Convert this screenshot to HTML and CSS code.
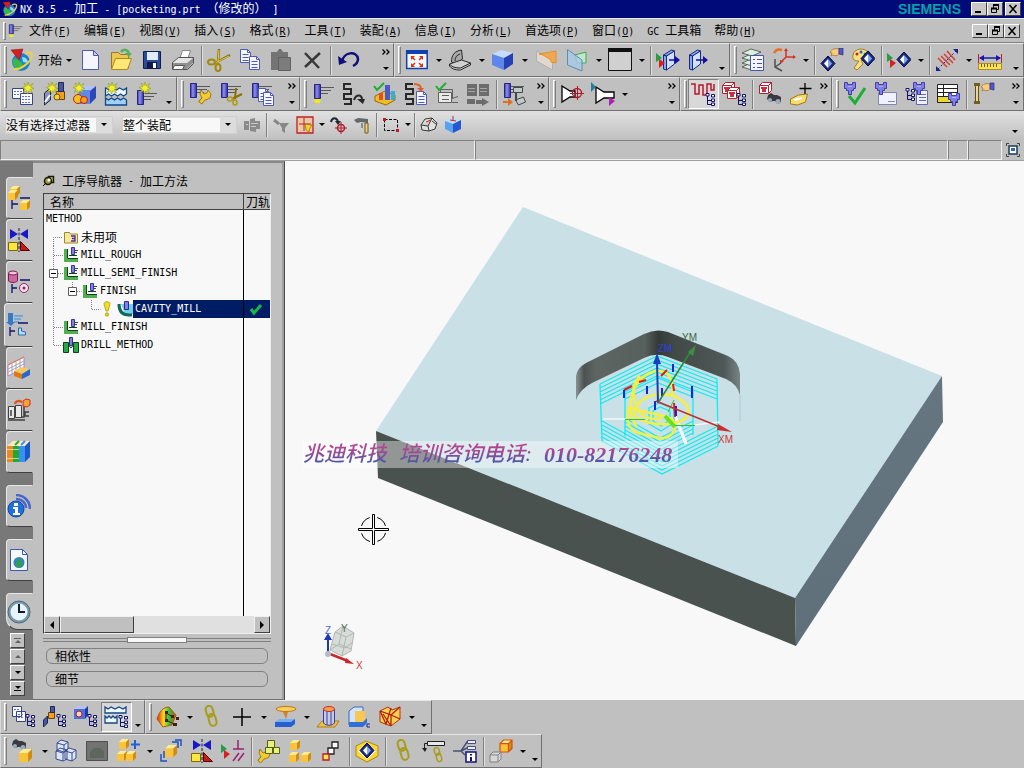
FILE: index.html
```html
<!DOCTYPE html>
<html lang="zh-CN">
<head>
  <meta charset="UTF-8">
  <meta name="viewport" content="width=device-width, initial-scale=1.0">
  <title>NX 8.5 - 加工</title>
  <link rel="stylesheet" href="styles.css">
</head>
<body>

  <!-- icons -->
  <svg class="sprite" aria-hidden="true">
    <defs>
      <linearGradient id="rainbow" x1="0" x2="1"><stop offset="0" stop-color="#e82010"/><stop offset=".35" stop-color="#f8d820"/><stop offset=".65" stop-color="#30c040"/><stop offset="1" stop-color="#e04020"/></linearGradient>
      <linearGradient id="steel" x1="0" x2="1"><stop offset="0" stop-color="#3838a0"/><stop offset=".4" stop-color="#9090f0"/><stop offset="1" stop-color="#2c2c98"/></linearGradient>
      <g id="p-mill"><path stroke="#585858" d="M8 4.500h14M8 7.500h11M8 10.500h8"/><path fill="url(#steel)" stroke="#24248a" d="M2.500 1.500h6v14h-6z"/></g>
      <g id="p-star"><path fill="#f4ee30" stroke="#8a9a10" stroke-width=".6" d="M6 0l1.200 3.800L11 1.500 8.500 5 12 6.500 8.300 7.400 10.500 11 6.800 8.800 5.500 12 4.600 8.600 1 10.500 3.400 7 0 5.500 3.800 4.600 2 1l3.200 2.600z"/></g>
      <g id="p-tree" fill="none" stroke="#10106c"><path d="M2.500 3v8.500H6M2.500 7.500H6"/><path fill="#fff" d="M1 .5h3v2.500H1zM6.500 1.500h3V4h-3zM6.500 6h3v2.500h-3zM6.500 10h3v2.500h-3z"/></g>
      <g id="p-cube"><path fill="#ffec90" d="M0 3l3-3h7L7 3z"/><path fill="#f9c43c" d="M0 3h7v7H0z"/><path fill="#d08c10" d="M7 3l3-3v7l-3 3z"/></g>
      <g id="p-doc"><path fill="#f4f6ff" stroke="#5058b8" d="M.5.500h7l3 3v10H.5z"/><path fill="none" stroke="#5058b8" d="M7.500.500v3h3M2.500 5.500h6M2.500 8.500h6M2.500 11.500h6"/></g>
      <g id="p-diamond"><path fill="#1c2c80" stroke="#000040" d="M8 0l7 7.500L8 15 1 7.500z"/><path fill="#fff" d="M8 3v9L4 7.500z"/><path fill="#80a8e8" d="M8 3v9l4-4.500z"/></g>
      <g id="p-hand"><path fill="#f8cc80" stroke="#a06820" stroke-width=".7" d="M0 4c2-3 5-4 9-3v5c-2 2-4 2-6 1L1 8l1-3z"/><path fill="#5058c8" stroke="#282890" stroke-width=".7" d="M9 0h4v7l-4-1z"/></g>
      <g id="p-bino"><path fill="#3a3a40" d="M1 2l3-2 3 2h3l4 2v5l-3 2-3-3H6l-3 1-3-3z"/><circle cx="3" cy="7" r="2" fill="#9ab"/><circle cx="11" cy="8.500" r="2.500" fill="#9ab"/></g>
      <g id="p-spin"><path fill="#8080e8" stroke="#4040a0" d="M.5.500h3v2h5v-2h3v6h-2v2h-2v4h-3v-4h-2v-2h-2z"/><path stroke="#b0b0f8" d="M4 4.500h4"/></g>
      <g id="p-rg"><path fill="#20a040" d="M0 0l6 5-6 4z"/><path fill="#d82020" d="M3 6l6 4-6 5z"/></g>
      <g id="p-chain" fill="none" stroke="#a89c18" stroke-width="2"><rect x="2" y="1" width="7" height="11" rx="3.500" transform="rotate(-15 5 6)"/><rect x="5" y="9" width="7" height="12" rx="3.500" transform="rotate(-15 8 15)"/></g>
      <g id="p-wrench"><path fill="none" stroke="#8a6a08" stroke-width="4.500" d="M2 14l6-7"/><path fill="#f4cc30" stroke="#8a6a08" stroke-width=".8" d="M3 1l3 4 3-1 1-3 3 4-1 4-4 2-4-2-2-4z"/><path stroke="#f4cc30" stroke-width="3" d="M2.500 13.500L9 6"/></g>
      <g id="p-red"><path fill="#fff" stroke="#b02030" d="M.5 3.500l3-3h9v8l-3 3h-9z"/><path fill="#c83040" d="M2 5h6v2H7v3H3V7H2z"/><path fill="none" stroke="#b02030" d="M9.500 11V3.500l3-3M.5 3.500h9"/></g>
    </defs>

    <symbol id="nx" viewBox="0 0 24 24"><circle cx="11" cy="14" r="9" fill="#1d7fd0"/><path fill="#38b848" d="M3 12c3-4 5 0 8 2s2 6-2 8c-4-1-7-5-6-10z"/><path fill="#8fe0f0" d="M12 9c4 0 6 3 6 6l-5-1z"/><path fill="#d42020" stroke="#801010" stroke-width=".5" d="M1 2l12-1-4 11z"/><path fill="none" stroke="#f0d040" stroke-width="2" d="M4 21c6 1 17-6 18-14 0-3-4-3-7-1"/></symbol>
    <symbol id="new" viewBox="0 0 24 24"><path fill="#f4f6ff" stroke="#5058b8" d="M4.500 2.500h11l5 5v14h-16z"/><path fill="#c8ccf4" stroke="#5058b8" d="M15.500 2.500v5h5z"/></symbol>
    <symbol id="open" viewBox="0 0 24 24"><path fill="#e8c850" stroke="#a07818" d="M2.500 4.500h7l2 2h8v14h-17z"/><path fill="#ffe878" stroke="#b08a18" d="M2.500 21.500l4-11h16l-4 11z"/><path fill="none" stroke="#58b058" stroke-width="2.500" d="M12 4c2-3 6-3 8 1"/><path fill="#58b058" d="M16 5h7l-3 4z"/></symbol>
    <symbol id="save" viewBox="0 0 24 24"><path fill="#2c4c98" stroke="#101c50" d="M3.500 3.500h17v17h-17z"/><path fill="#e0ecff" d="M7 4h11v8H7z"/><path fill="#10184a" d="M7 14h10v7H7z"/><path fill="#fff" d="M13 15h3v5h-3z"/></symbol>
    <symbol id="print" viewBox="0 0 24 24"><path fill="#fff" stroke="#888" d="M8.500 11.500l3-9h8l-3 9z"/><path fill="#e4e4e4" stroke="#505050" d="M1.500 14.500l6-5h15v6l-6 6h-15z"/><path fill="#909090" d="M2 15h14l6-5v5l-6 6H2z"/><path fill="#f8f8f8" stroke="#555" d="M3.500 17.500h10l-2 4h-10z"/></symbol>
    <symbol id="cut" viewBox="0 0 24 24"><path stroke="#8a7008" stroke-width="2.500" d="M12 1l-1 13M23 7L8 15"/><path stroke="#e8d050" d="M12 2l-1 12M22 8L8 15"/><g fill="none" stroke="#a08a10" stroke-width="2"><ellipse cx="4.500" cy="14" rx="3.500" ry="2.500"/><ellipse cx="11" cy="19.500" rx="2.500" ry="3.500"/></g></symbol>
    <symbol id="copy" viewBox="0 0 24 24"><use href="#p-doc" x="2" y="1"/><use href="#p-doc" x="11" y="8"/></symbol>
    <symbol id="paste" viewBox="0 0 24 24"><path fill="#747474" d="M2 4h6l2-3h2l2 3h5v18H2z"/><path fill="#7c7c7c" stroke="#606060" d="M9.500 9.500h12v13h-12z"/></symbol>
    <symbol id="del" viewBox="0 0 24 24"><path stroke="#383838" stroke-width="2.500" d="M5 5l14 15M20 5L5 19"/></symbol>
    <symbol id="undo" viewBox="0 0 24 24"><path fill="none" stroke="#10107c" stroke-width="2.500" d="M6 14c1-10 15-12 16-3 0 4-3 6-5 7"/><path fill="#10107c" d="M2 8l1 9 8-3z"/></symbol>
    <symbol id="more" viewBox="0 0 8 6"><path fill="none" stroke="#000" stroke-width="1.300" d="M.5.500L3 3 .5 5.500M4.500.500L7 3 4.500 5.500"/></symbol>

    <symbol id="fit" viewBox="0 0 24 24"><path fill="#f4f8ff" stroke="#1040b0" stroke-width="1.500" d="M1.700 3h20.500v17.500H1.700z"/><path fill="#1040b0" d="M1 2h22v4H1z"/><path fill="#e03010" d="M6 8h4L6 12zM18 8v4l-4-4zM6 19v-4l4 4zM18 19h-4l4-4z"/><path stroke="#e03010" stroke-width="1.500" d="M7 9l3 3M17 9l-3 3M7 18l3-3M17 18l-3-3"/></symbol>
    <symbol id="laptop" viewBox="0 0 24 24"><path fill="#a8a8a8" stroke="#282828" d="M3.500 14c0-7 3-11 10-12l1 9-7 5z"/><path fill="#d0d0d0" stroke="#282828" d="M1.500 16l12-4 9 3-10 5c-5 0-9-1-11-4z"/><path fill="none" stroke="#282828" d="M7 13c0-4 2-6 5-7M1.500 16v2c3 4 8 4 11 4l10-5v-2"/></symbol>
    <symbol id="bluecube" viewBox="0 0 24 24"><path fill="#c4dcff" d="M1 6l9-4 12 3-9 5z"/><path fill="#5f86ec" d="M1 6l12 4v12L1 17z"/><path fill="#2440b4" d="M13 10l9-5v11l-9 6z"/></symbol>
    <symbol id="secorange" viewBox="0 0 24 24"><path fill="#e0d8d0" stroke="#b0b0b0" d="M2.500 3l16 9v10l-16-9z"/><path fill="#f0a850" stroke="#e09030" d="M5 6l17-3v12l-5-1v-2l-8-5z"/></symbol>
    <symbol id="secgreen" viewBox="0 0 24 24"><path fill="#c0e8c8" stroke="#40a858" d="M10 7l11-3v11h-9z"/><path fill="#a8c8e8" fill-opacity=".8" stroke="#5890b0" d="M2.500 1.500L17 12v11L2.500 17z"/></symbol>
    <symbol id="blank" viewBox="0 0 24 24"><path fill="#d0d0d0" stroke="#101010" d="M.5 1.500h23v21H.5z"/><path fill="#101010" d="M0 0h24v4H0z"/></symbol>
    <symbol id="boxin" viewBox="0 0 24 24"><path fill="#88a8f0" stroke="#182880" d="M7.500 7l3 1v14l-3-1zM10.500 8l8-5-3-1-8 5z"/><path fill="#d0e0ff" stroke="#182880" d="M10.500 8l8-5v13l-8 6z"/><use href="#p-rg" y="5"/><path stroke="#1010a0" stroke-width="1.500" d="M13 12h8"/><path fill="#1010a0" d="M19 8l5 4-5 4z"/></symbol>
    <symbol id="boxout" viewBox="0 0 24 24"><path fill="#88a8f0" stroke="#182880" d="M2.500 7l3 1v14l-3-1zM5.500 8l8-5-3-1-8 5z"/><path fill="#d0e0ff" stroke="#182880" d="M5.500 8l8-5v13l-8 6z"/><path stroke="#1010a0" stroke-width="1.500" d="M9 12h10"/><path fill="#1010a0" d="M16 8l5 4-5 4z"/></symbol>
    <symbol id="layers" viewBox="0 0 24 24"><g fill="#d8f0dc" stroke="#404848" stroke-width=".8"><path d="M1 19l9-4 10 3-9 4z"/><path d="M1 15l9-4 10 3-9 4z"/><path d="M1 10l9-4 10 3-9 4z"/><path d="M1 5l9-4 10 3-9 4z"/></g><path fill="#f4f6ff" stroke="#4850b0" d="M9.500 7.500h13v15h-13z"/><path stroke="#4850b0" d="M12 11.500h2M16 11.500h5M12 15.500h2M16 15.500h5M12 19.500h2M16 19.500h5"/></symbol>
    <symbol id="wcs" viewBox="0 0 24 24"><path fill="none" stroke="#d83020" stroke-width="1.500" d="M14 2v7l-4 4M14 9h8"/><path fill="#d83020" d="M12 3l2-3 2 3zM21 7l3 2-3 2zM8 12v4l4-3z"/><path fill="none" stroke="#505050" stroke-width="1.500" d="M3 11v8l7 4M3 19l6-4"/><path fill="none" stroke="#e87020" stroke-width="2.500" d="M2 5c2-4 5-4 8-3"/></symbol>
    <symbol id="showhide" viewBox="0 0 24 24"><use href="#p-diamond" y="8"/><use href="#p-hand" x="10"/></symbol>
    <symbol id="palette" viewBox="0 0 24 24"><path fill="#f8e080" stroke="#a08020" d="M2 7C3 0 14-1 18 5l-4 6-4 1 2 4-6 6-3-2 5-7C4 13 1 12 2 7z"/><circle cx="6" cy="6" r="1.500" fill="#d02020"/><circle cx="10" cy="4" r="1.500" fill="#2060d0"/><circle cx="14" cy="6" r="1.500" fill="#20a040"/><use href="#p-diamond" x="9" y="3"/></symbol>
    <symbol id="moveobj" viewBox="0 0 24 24"><use href="#p-rg" y="5"/><use href="#p-diamond" x="9" y="4"/></symbol>
    <symbol id="measure1" viewBox="0 0 24 24"><g stroke="#d04030" stroke-width="1.500" fill="none"><path d="M3 10l9 9M6 8l9 9M9 6l9 9M12 3l8 9"/></g><path stroke="#202080" d="M3 21L21 3" stroke-dasharray="2 2"/><path fill="#202080" d="M18 1h5v5zM1 18v5h5z"/></symbol>
    <symbol id="ruler" viewBox="0 0 24 24"><path fill="#f8e060" stroke="#b09018" d="M.5 15.500h23v6H.5z"/><path stroke="#706010" d="M3.500 16v3M6.500 16v3M9.500 16v3M12.500 16v3M15.500 16v3M18.500 16v3"/><path stroke="#c02020" d="M.5 6v9M23.500 6v9"/><path stroke="#1818b0" stroke-width="1.500" d="M2 10h20"/><path fill="#1818b0" d="M1 10l5-3v6zM23 10l-5-3v6z"/></symbol>

    <symbol id="cprog" viewBox="0 0 24 24"><path fill="#f8f8ff" stroke="#3a4288" d="M1.500 6.500h11v10h-11z"/><path stroke="#6070c0" stroke-dasharray="2 1" d="M3 9.500h8M3 12.500h8"/><path fill="#f8f8ff" stroke="#3a4288" d="M9.500 11.500h12v11h-12z"/><path stroke="#6070c0" stroke-dasharray="2 1" d="M11 14.500h9M11 17.500h9M11 20.500h9"/><use href="#p-star" x="11"/></symbol>
    <symbol id="ctool" viewBox="0 0 24 24"><path fill="#8090c0" stroke="#202850" d="M2.500 11l6-5v12l-6 5z"/><path stroke="#fff" stroke-width="2" d="M3 20l5-7"/><path fill="#f0a020" stroke="#704008" d="M14.500 9.500h8v8h-8z"/><path fill="#4858a0" stroke="#202850" d="M16.500.500h5v9h-5z"/><circle cx="15" cy="15" r="3" fill="#f8d030" stroke="#705008"/><use href="#p-star" x="4"/></symbol>
    <symbol id="cgeom" viewBox="0 0 24 24"><path fill="#b0c4ff" d="M5 8l6-4h12l-6 5z"/><path fill="#6088f0" d="M5 8h12v14H5z"/><path fill="#2c48b8" d="M17 9l6-5v12l-6 6z"/><circle cx="5" cy="17" r="4.500" fill="#f0c020" stroke="#c02010"/><circle cx="11" cy="18" r="3.500" fill="#f0a020" stroke="#c02010"/><use href="#p-star"/></symbol>
    <symbol id="cmeth" viewBox="0 0 24 24"><path fill="#f0f8ff" stroke="#104888" stroke-width="1.300" d="M1.500 6v8l3-2 3 2 3-2 3 2 3-2 3 2 3-2V6l-3 2-4-2-3 2-4-2-3 2z"/><path fill="#a0d0f8" stroke="#104888" stroke-width="1.300" d="M1.500 23v-7l3 2 3-2 3 2 3-2 3 2 3-2 3 2v5z"/><use href="#p-star" x="2"/></symbol>
    <symbol id="cop" viewBox="0 0 24 24"><use href="#p-mill" y="7"/><use href="#p-star" x="4"/></symbol>
    <symbol id="oedit" viewBox="0 0 24 24"><use href="#p-mill"/><use href="#p-wrench" x="10" y="7"/></symbol>
    <symbol id="ocut" viewBox="0 0 24 24"><use href="#p-mill"/><path stroke="#8a7008" stroke-width="2" d="M17 6l-1 11M23 12l-10 5"/><g fill="none" stroke="#b09a18" stroke-width="1.500"><ellipse cx="11" cy="17" rx="2.500" ry="2"/><ellipse cx="16" cy="20.500" rx="2" ry="2.500"/></g></symbol>
    <symbol id="ocopy" viewBox="0 0 24 24"><use href="#p-mill"/><use href="#p-doc" x="8" y="6"/><use href="#p-doc" x="13" y="10"/></symbol>
    <symbol id="gen" viewBox="0 0 24 24"><use href="#p-mill" x="1" y="1"/><path fill="#f0e820" d="M3 17h7l-1 4H4z"/></symbol>
    <symbol id="replay" viewBox="0 0 24 24"><path fill="none" stroke="#282828" stroke-width="2" d="M9 2H2v5h7v5H2v5h7v5H2M12 18c2-6 8-6 8 0"/><path fill="#282828" d="M15 17h8l-2 5z"/></symbol>
    <symbol id="verify" viewBox="0 0 24 24"><path fill="#f0c020" stroke="#a06808" d="M2 14l10-5 10 4v5l-9 5-11-4z"/><path fill="#e05030" d="M6 11h4v7H6z"/><path fill="#4a58c8" d="M12 3h5v15h-5z"/><path fill="#30b0d8" d="M18 9h4v9h-4z"/><path fill="none" stroke="#18b030" stroke-width="2" d="M1 4l3 4 7-7"/></symbol>
    <symbol id="listing" viewBox="0 0 24 24"><path fill="none" stroke="#282828" stroke-width="2" d="M9 2H2v5h7v5H2v5h7v5H2"/><use href="#p-doc" x="12" y="9"/><path fill="none" stroke="#e06020" stroke-width="2" d="M10 2c5 0 7 2 7 5"/><path fill="#e06020" d="M13 6h7l-3 4z"/></symbol>
    <symbol id="sim" viewBox="0 0 24 24"><path fill="#e8e8e8" stroke="#606060" d="M3.500 10.500h13v10h-13z"/><path fill="none" stroke="#606060" d="M5.500 10V7.500h12v9M7 13.500h7M7 17.500h7M17 20.500h6M17 16.500l6-2"/><path fill="none" stroke="#20b030" stroke-width="2" d="M1 4l3 4 7-7"/></symbol>
    <symbol id="grayops" viewBox="0 0 24 24"><path fill="#6c6c6c" d="M1 2h10v12H1zM13 2h10v12H13zM1 17h8v5H1zM10 18h6v-2l7 4-7 4v-2h-6z"/><path stroke="#a4a4a4" d="M2 6.500h7M2 9.500h7M14 6.500h7M14 9.500h7"/></symbol>
    <symbol id="post" viewBox="0 0 24 24"><use href="#p-mill"/><path fill="none" stroke="#e07020" stroke-width="2" d="M1 20h6"/><path fill="#e07020" d="M6 16l5 4-5 4z"/><path fill="#c0c8c8" stroke="#404848" d="M11.500 5.500h9v5h-9zM13.500 18l8-3 2 5-7 3z"/><path fill="none" stroke="#404848" stroke-width="2" d="M14 11v8"/></symbol>
    <symbol id="horn1" viewBox="0 0 24 24"><path fill="#fff" stroke="#000" stroke-width="1.300" d="M2 4l8 5h5v6h-5l-8 5z"/><circle cx="17" cy="11" r="4.500" fill="none" stroke="#b01828" stroke-width="1.300"/><path stroke="#b01828" d="M10 11.500h14M17.500 4v14"/></symbol>
    <symbol id="horn2" viewBox="0 0 24 24"><path fill="#fff" stroke="#000" stroke-width="1.300" d="M5 5l8 5h10v6H13l-8 5z"/><path fill="#2080a0" d="M0 0l5 5-5 5z"/><path fill="#b020b0" d="M18 15l6 4-6 5z"/></symbol>
    <symbol id="progview" viewBox="0 0 24 24"><path fill="none" stroke="#b81828" stroke-width="1.500" d="M0 2h4v10h4V3h4v10h4V2h4v6h3V2"/><use href="#p-tree" x="14" y="11"/></symbol>
    <symbol id="toolview" viewBox="0 0 24 24"><use href="#p-red"/><use href="#p-red" x="5" y="5"/><use href="#p-tree" x="14" y="11"/></symbol>
    <symbol id="findred" viewBox="0 0 24 24"><use href="#p-red" x="1"/><use href="#p-bino" x="9" y="11"/></symbol>
    <symbol id="plus" viewBox="0 0 24 24"><path stroke="#000" stroke-width="1.300" d="M16 1v11M10.500 6.500h12"/><path fill="#f8dc70" stroke="#a07818" d="M1.500 17l8-4 9-1-2 8-8 3-7-1z"/><path stroke="#fff" stroke-width="2" d="M5 18l8-2"/></symbol>
    <symbol id="vcheck" viewBox="0 0 24 24"><use href="#p-spin" x="1"/><path fill="none" stroke="#18b030" stroke-width="3" d="M6 14l6 7L22 6"/></symbol>
    <symbol id="vcard" viewBox="0 0 24 24"><path fill="#f0f0ff" stroke="#8088b0" d="M4.500 10.500h18v12h-18z"/><path stroke="#8088b0" d="M14 19.500h7"/><use href="#p-spin" x="1"/></symbol>
    <symbol id="vtree" viewBox="0 0 24 24"><use href="#p-tree" y="6"/><path fill="#f0f0ff" stroke="#6068b8" d="M11.500 8.500h11v14h-11z"/><path stroke="#6068b8" d="M14 12.500h7M14 15.500h7M14 18.500h7"/><use href="#p-spin" x="8"/></symbol>
    <symbol id="vtable" viewBox="0 0 24 24"><path fill="#fff" stroke="#202020" d="M1.500 2.500h20v18h-20z"/><path stroke="#202020" d="M2 6.500h19M2 10.500h19M2 14.500h19M7.500 3v17"/><path fill="#e8d830" d="M2 15h12v5H2z"/><use href="#p-spin" x="12" y="11"/></symbol>
    <symbol id="pole" viewBox="0 0 24 24"><path fill="#e8d890" stroke="#605018" d="M3.500 3.500h3v16h-3z"/><path fill="#706020" d="M2 1h6v3H2zM2 19h6v3H2z"/><use href="#p-hand" x="9" y="1"/></symbol>

    <symbol id="s1" viewBox="0 0 18 18"><path fill="#8a8a8a" d="M1 5h5v9H1zM7 3l5-1v3h5v8h-4v3l-6-1z"/><path stroke="#c8c8c8" d="M8 7.500h7M8 10.500h5M3 8.500h2"/></symbol>
    <symbol id="s2" viewBox="0 0 18 18"><path fill="none" stroke="#888" stroke-width="3" d="M2 4l5 4"/><path fill="#888" d="M7 7h10l-4 5v5l-3-2v-3z"/></symbol>
    <symbol id="s3" viewBox="0 0 18 18"><path fill="#e8c8a8" stroke="#c02020" stroke-width="1.300" d="M1 1h16v16H1z"/><path stroke="#c02020" d="M8 2v13M3 8h12"/><path fill="#f0d020" stroke="#806008" stroke-width=".6" d="M9 8l7 1-2 3-1 4-3-2z"/></symbol>
    <symbol id="s4" viewBox="0 0 18 18"><path fill="none" stroke="#202830" stroke-width="2" d="M2 6c1-5 6-5 7 0"/><path fill="#202830" d="M6 5h6L9 9z"/><circle cx="12" cy="12" r="3.500" fill="none" stroke="#b01828" stroke-width="1.500"/><path stroke="#b01828" d="M12 6v12M6 12h12"/></symbol>
    <symbol id="s5" viewBox="0 0 18 18"><path fill="#606870" d="M1 4l4-2 10 1v4L8 6 4 7z"/><path fill="#e8d080" stroke="#705818" d="M12 7h3v10h-3z"/><path stroke="#404850" d="M9 7v5"/></symbol>
    <symbol id="s6" viewBox="0 0 18 18"><path fill="none" stroke="#000" stroke-dasharray="3 1.500" d="M2.500 3.500h13v11h-13z"/><path fill="#c01828" d="M1 2h3v3H1zM14 13h3v3h-3z"/></symbol>
    <symbol id="s7" viewBox="0 0 18 18"><path fill="#e0e0e0" stroke="#383838" d="M1 9l4-6 7-1 5 5-2 6-6 2-7-1zM1 9l7 1 4-8M8 10l1 5M12 5l4 3"/><path stroke="#d02020" d="M6 6l5-2"/></symbol>
    <symbol id="s8" viewBox="0 0 18 18"><path fill="#b8e0ff" d="M1 5l8-4 8 3-8 4z"/><path fill="#58a0f0" d="M1 5l8 3v9l-8-4z"/><path fill="#2458d0" d="M9 8l8-4v9l-8 4z"/><path stroke="#e02020" d="M9 0v5M6 4l6 1"/></symbol>

    <symbol id="nprog" viewBox="0 0 24 24"><path fill="#f8f8ff" stroke="#3a4288" d="M1.500 1.500h9v10h-9zM5.500 6.500h9v10h-9z"/><path stroke="#6070c0" stroke-dasharray="2 1" d="M3 4.500h6M7 9.500h6M7 12.500h6"/><use href="#p-tree" x="14" y="9"/></symbol>
    <symbol id="ntool" viewBox="0 0 24 24"><path fill="#f0a020" stroke="#704008" d="M6.500 7.500h6v6h-6z"/><path fill="#4858a0" stroke="#202850" d="M8.500 1.500h4v6h-4zM1.500 15l4-4v7l-4 4z"/><use href="#p-tree" x="14" y="9"/></symbol>
    <symbol id="ngeom" viewBox="0 0 24 24"><path fill="#b0c4ff" d="M1 4l4-3h10l-3 3z"/><path fill="#4a70e0" d="M1 4h11v10H1z"/><path fill="#2438a0" d="M12 4l3-3v9l-3 4z"/><circle cx="6" cy="9" r="3" fill="#f8d8c0" stroke="#c02010"/><use href="#p-tree" x="14" y="9"/></symbol>
    <symbol id="nmeth" viewBox="0 0 24 24"><path fill="#f0f8ff" stroke="#104888" stroke-width="1.300" d="M1 2v6h21V2l-3 2-4-2-4 2-4-2-3 2zM1 18v-7l2 2 2-2 2 2 2-2 2 2 2-2v7z"/><use href="#p-tree" x="14" y="10"/></symbol>
    <symbol id="fringe" viewBox="0 0 24 24"><path fill="url(#rainbow)" stroke="#a06010" d="M1 14C3 7 7 2 13 2l7 8-4 10-9 2z"/><g fill="#402010"><path d="M9 6h3v3H9zM9 14h3v3H9zM15 10h3v3h-3zM17 18h4v3h-4zM20 12h3v3h-3z"/></g><path fill="none" stroke="#402010" d="M10 8v7l8 4M10 8l7 4"/></symbol>
    <symbol id="chain" viewBox="0 0 24 24"><use href="#p-chain" x="5"/></symbol>
    <symbol id="cross" viewBox="0 0 24 24"><path stroke="#000" stroke-width="1.500" d="M12 3v18M3 12h18"/></symbol>
    <symbol id="spot" viewBox="0 0 24 24"><ellipse cx="13" cy="4" rx="10" ry="2.500" fill="#f8d060" stroke="#c07818"/><path fill="#d08030" d="M10 7h5l-2 7z"/><path fill="#78b0f8" d="M2 17l4-3h16l-4 3z"/><path fill="#2860d0" d="M2 17h16l4-3v5l-4 3H2z"/></symbol>
    <symbol id="cyl" viewBox="0 0 24 24"><path fill="#f0c040" stroke="#b08010" d="M1 22l5-6h17l-4 6z"/><path fill="#c8c8e0" stroke="#3040b0" d="M7.500 4v14c2 3 9 3 11 0V4"/><path stroke="#3040b0" d="M11 6v14M15 6v14"/><ellipse cx="13" cy="4" rx="5.500" ry="2.500" fill="#f0a050" stroke="#d03020"/></symbol>
    <symbol id="block" viewBox="0 0 24 24"><path fill="#d0e4ff" stroke="#3868c0" d="M2 6l5-4h9v14l-3 4H2z"/><path fill="#f8c850" d="M8 6h10v12H8z"/><path fill="#3070d8" d="M2 17h14l4-4v5l-4 4H2z"/><path fill="none" stroke="#2020a0" d="M23 19h-3v3h3"/></symbol>
    <symbol id="wire" viewBox="0 0 24 24"><path fill="#f8d050" stroke="#c03010" d="M2 6l8-4 4 3 8-3v12l-9 7-11-4z"/><path fill="none" stroke="#b02010" stroke-width="1.300" d="M2 6l11 4v11M13 10l9-8M2 6l6 13 5-16M13 21L5 9M22 14l-9-4"/></symbol>

    <symbol id="findcube" viewBox="0 0 24 24"><use href="#p-bino" x="1"/><g transform="translate(8 10) scale(1.300)"><use href="#p-cube"/></g></symbol>
    <symbol id="cubes3" viewBox="0 0 24 24"><g fill="#dce6f4" stroke="#384c90"><path d="M3 4l4-3 7 2v7l-4 3-7-2zM2 12l4-3 7 2v9l-4 2-7-2zM11 12l4-3 7 2v8l-4 3-7-2z"/><path fill="none" d="M3 4l7 2v6M10 6l4-3M2 12l7 2v8M9 14l4-3M11 12l7 2v8M18 14l4-3"/></g></symbol>
    <symbol id="graycube" viewBox="0 0 24 24"><path fill="#727272" stroke="#505050" d="M1.500 2.500h21v19h-21z"/><path fill="#5e665e" d="M5 13l4-4h5l5 3v7H5z"/></symbol>
    <symbol id="addcube" viewBox="0 0 24 24"><use href="#p-cube" x="3"/><use href="#p-cube" x="1" y="12"/><use href="#p-cube" x="10" y="12"/><path stroke="#2060d0" stroke-width="2" d="M19 1v9M15 5.500h9"/></symbol>
    <symbol id="movecube" viewBox="0 0 24 24"><g transform="translate(6 6) scale(1.200)"><use href="#p-cube"/></g><path fill="none" stroke="#2050c0" stroke-width="1.500" d="M16 1h6v6M13 3h6v6M2 15v7h6M5 12v7"/></symbol>
    <symbol id="mirror" viewBox="0 0 24 24"><path fill="#1818c8" d="M3 1l8 5-8 5zM21 1l-8 5 8 5z"/><path fill="#f8e840" stroke="#806808" d="M1.500 14.500h9v8h-9z"/><path fill="#c81818" stroke="#500" d="M13.500 13.500v9h9z"/><path stroke="#181840" stroke-dasharray="3 1.500" d="M12 0v24"/></symbol>
    <symbol id="constr" viewBox="0 0 24 24"><use href="#p-rg" y="5"/><path stroke="#982078" stroke-width="1.500" d="M17 1v9M12 10h11M12 22l6-8M17 22l6-8"/></symbol>
    <symbol id="wrcube" viewBox="0 0 24 24"><use href="#p-wrench" y="9"/><g fill="#e8f080" stroke="#586010"><path d="M10.500 1.500h7v7h-7zM8.500 8.500h7v6h-7zM16.500 8.500h6v6h-6z"/></g></symbol>
    <symbol id="threecube" viewBox="0 0 24 24"><use href="#p-cube" x="2" y="1"/><use href="#p-cube" x="1" y="13"/><use href="#p-cube" x="13" y="13"/></symbol>
    <symbol id="steps" viewBox="0 0 24 24"><path fill="#fff" stroke="#202020" stroke-width="1.300" d="M13 3h6v6h-6zM9 9h6v6H9z"/><path fill="#f8e860" stroke="#c01818" stroke-width="1.300" d="M4 15h6v6H4z"/></symbol>
    <symbol id="hexa" viewBox="0 0 24 24"><path fill="#f8d838" stroke="#b08810" d="M1 7l10-5 12 5v10l-11 6-11-6z"/><path fill="#fff" d="M12 4l9 8-9 8-9-8z"/><use href="#p-diamond" x="4" y="4"/></symbol>
    <symbol id="chain2" viewBox="0 0 24 24"><path fill="#e8e8e8" stroke="#202020" d="M5.500 2.500h17v4h-17z"/><path fill="none" stroke="#202020" d="M5 4.500H2.500V10"/><path fill="#202020" d="M0 9h5l-2 4z"/><g transform="translate(11 8) scale(.7)"><use href="#p-chain"/></g></symbol>
    <symbol id="infotree" viewBox="0 0 24 24"><path fill="none" stroke="#485078" stroke-width="1.500" d="M0 12h8l6-9h9M8 12l6-3h9M8 12l4 4"/><path fill="#e8ecff" stroke="#485078" d="M14.500 1.500h8v3h-8zM14.500 7.500h8v3h-8z"/><path fill="#fff" stroke="#101080" stroke-width="1.500" d="M13 13h10v10H13z"/><path stroke="#101080" stroke-width="2" d="M18 15v1.500M18 18v4"/></symbol>
    <symbol id="cubeup" viewBox="0 0 24 24"><g transform="translate(11 1) scale(1.200)"><use href="#p-cube"/><path fill="none" stroke="#d85010" d="M0 3l3-3h7v7l-3 3H0zM0 3h7v7M7 3l3-3"/></g><path fill="#d8d8d8" stroke="#808080" d="M1 16l3-3h8v7l-3 3H1zM1 16h8v7M9 16l3-3"/></symbol>

    <!-- resource bar -->
    <symbol id="r1" viewBox="0 0 24 24"><use href="#p-cube" x="3"/><use href="#p-cube" x="1" y="4"/><use href="#p-cube" x="13" y="14"/><path fill="none" stroke="#10106c" stroke-width="1.300" d="M5 14v9M5 18h6M13 12h10"/></symbol>
    <symbol id="r3" viewBox="0 0 24 24"><path fill="#d068a0" stroke="#702050" d="M1.500 3v8c2 2 7 2 9 0V3"/><ellipse cx="6" cy="3" rx="4.500" ry="2" fill="#f8c0e0" stroke="#702050"/><path fill="none" stroke="#10106c" stroke-width="1.300" d="M5 14v9M5 18h5M13 10h10"/><circle cx="17" cy="18" r="4.500" fill="#f8e0f0" stroke="#902858"/><circle cx="17" cy="18" r="1.500" fill="#902858"/></symbol>
    <symbol id="r4" viewBox="0 0 24 24"><path fill="#3878c8" d="M3 0h5v9h2l-4 4-5-4h2z"/><path stroke="#58a0e0" stroke-width="1.500" d="M9 3h9M9 6h7M9 9h5"/><path fill="none" stroke="#10106c" stroke-width="1.300" d="M5 14v9M5 18h5M13 10h10"/><path fill="#b8dcf8" stroke="#2868b0" d="M13.500 15v7h7v-3l-4-1v-3z"/></symbol>
    <symbol id="r5" viewBox="0 0 24 24"><path fill="#fff" stroke="#b080c8" d="M1 9l16-8v11L1 20z"/><path stroke="#a0a0b8" d="M1 13l16-8M1 16l16-8M5 8v11M9 6v11M13 4v11"/><path stroke="#e07840" d="M1 9l16-8"/><path fill="#f8c860" d="M7 15l8-4 8 2-8 5z"/><path fill="#e07818" d="M7 15l8 3v5l-8-3z"/><path fill="#2868d0" d="M15 18l8-5v6l-8 4z"/></symbol>
    <symbol id="r6" viewBox="0 0 24 24"><path fill="#e8e8e8" stroke="#404040" d="M1.500 8.500h6v12h-6zM8.500 7.500h6v12h-6z"/><path fill="none" stroke="#404040" stroke-width="1.500" d="M17 8v11h-3M22 14h-4v4h4M1 22h17M4 12v6"/><path fill="none" stroke="#e05818" stroke-width="2.500" d="M8 6c1-4 5-3 7-2"/><path fill="#f8a040" stroke="#d03010" d="M16 3l3-2 4 1v5l-3 2-4-1z"/></symbol>
    <symbol id="r7" viewBox="0 0 24 24"><path fill="#ffe8c0" d="M0 6l6-5h17l-5 5z"/><path fill="#f08820" d="M0 6h6v16H0z"/><path fill="#20a830" d="M6 6h6v16H6z"/><path fill="#3890f0" d="M12 6h6v16h-6z"/><path fill="#1858c8" d="M18 6l5-5v16l-5 5z"/><path stroke="#fff" d="M6 6l5-5M12 6l5-5"/><path stroke="#20a830" stroke-width="2" d="M8 5l4-4"/><path stroke="#3890f0" stroke-width="2" d="M14 5l4-4"/><path stroke="#f8f0c0" stroke-width=".7" d="M0 9.500h12M0 18.500h12"/></symbol>
    <symbol id="r8" viewBox="0 0 24 24"><circle cx="9" cy="15" r="8" fill="#2070d8" stroke="#1048a0"/><path fill="#fff" d="M7 9h4v3H7zM6 13h5v6h2v2H6v-2h2v-4H6z"/><path fill="none" stroke="#4868c8" stroke-width="2.500" d="M9 1c8 0 14 6 14 14M9 5c6 0 10 4 10 9"/></symbol>
    <symbol id="r9" viewBox="0 0 24 24"><path fill="#f4f8ff" stroke="#3858b8" d="M3.500 1.500h12l5 5v16h-17z"/><path fill="none" stroke="#3858b8" d="M15.500 1.500v5h5"/><circle cx="12" cy="14.500" r="5.500" fill="#3880c8"/><path fill="#30a050" d="M12 9l4 8-4 3-4-3z"/></symbol>
    <symbol id="r10" viewBox="0 0 24 24"><circle cx="12" cy="12" r="11" fill="#7898a8" stroke="#506878"/><circle cx="12" cy="12" r="8.500" fill="#e8f4fc"/><path fill="none" stroke="#101828" stroke-width="2" d="M12 4v8h6"/></symbol>

    <!-- tree -->
    <symbol id="g-tee" viewBox="0 0 19 18"><path fill="none" stroke="#808080" stroke-dasharray="1 1" d="M9.500 0v18M10 9.500h9"/></symbol>
    <symbol id="g-end" viewBox="0 0 19 18"><path fill="none" stroke="#808080" stroke-dasharray="1 1" d="M9.500 0v9.500h9"/></symbol>
    <symbol id="g-first" viewBox="0 0 19 18"><path fill="none" stroke="#808080" stroke-dasharray="1 1" d="M9.500 18V9.500h9"/></symbol>
    <symbol id="g-line" viewBox="0 0 19 18"><path stroke="#808080" stroke-dasharray="1 1" d="M9.500 0v18"/></symbol>
    <symbol id="g-box" viewBox="0 0 19 18"><path fill="none" stroke="#808080" stroke-dasharray="1 1" d="M9.500 0v18M10 9.500h9"/><path fill="#fff" stroke="#606060" d="M5.500 5.500h8v8h-8z"/><path stroke="#000" d="M7 9.500h5"/></symbol>
    <symbol id="g-boxend" viewBox="0 0 19 18"><path fill="none" stroke="#808080" stroke-dasharray="1 1" d="M9.500 0v9.500h9"/><path fill="#fff" stroke="#606060" d="M5.500 5.500h8v8h-8z"/><path stroke="#000" d="M7 9.500h5"/></symbol>
    <symbol id="t-folder" viewBox="0 0 16 16"><path fill="#f4e8a0" stroke="#a08828" d="M1.500 3.500h5l1 1.500h7v9h-13z"/><path fill="none" stroke="#5028a0" stroke-width="1.300" d="M8 7h4v5H8M9 9.500h3"/></symbol>
    <symbol id="t-mill" viewBox="0 0 16 16"><path fill="#50b050" d="M1 2h3v10h11v3H1z"/><path fill="none" stroke="#104018" d="M4.500 2v9.500H15M6 8.500h8"/><path fill="#8080e0" stroke="#3838a0" d="M8.500.500h3v7h-3z"/><path stroke="#404040" d="M12 3.500h3M12 5.500h2"/></symbol>
    <symbol id="t-drill" viewBox="0 0 16 16"><path fill="#28a848" stroke="#104018" d="M.5 5.500h5v10h-5zM10.500 5.500h5v10h-5z"/><path fill="#8080e0" stroke="#2c2c90" d="M6.500.500h3v8h-3z"/><path fill="none" stroke="#104018" d="M5.500 8l2.500 3 2.500-3"/></symbol>
    <symbol id="t-cavity" viewBox="0 0 16 16"><path fill="#70d0f0" d="M4 3h12v10H8z"/><path fill="none" stroke="#106858" stroke-width="3" d="M2 3c0 8 4 11 10 11h3"/><path fill="#8080e0" stroke="#2c2c90" d="M7.500.500h4v8h-4z"/></symbol>
    <symbol id="t-warn" viewBox="0 0 8 16"><path fill="#f0e020" stroke="#a89810" stroke-width=".8" d="M1 3c0-3 6-3 6 0L5 10H3z"/><circle cx="4" cy="13.500" r="1.700" fill="#e8d818" stroke="#a89810" stroke-width=".8"/></symbol>
    <symbol id="t-ok" viewBox="0 0 14 14"><path fill="none" stroke="#18b848" stroke-width="3" d="M2 7l3 4 7-8"/></symbol>
    <symbol id="pin" viewBox="0 0 12 12"><path fill="#c8c860" stroke="#181808" stroke-width="1.500" d="M5.500 1.500h5v6h-5z"/><circle cx="5" cy="6" r="3.500" fill="#a0a038" stroke="#181808" stroke-width="1.500"/><circle cx="6" cy="5" r="1.500" fill="#fff"/><path stroke="#000" d="M0 11l3-3"/></symbol>
    <symbol id="min" viewBox="0 0 12 10"><path fill="#000" d="M2 7h6v2H2z"/></symbol>
    <symbol id="restore" viewBox="0 0 12 10"><path fill="none" stroke="#000" d="M4.500 4V1.500h5v4H8"/><path stroke="#000" d="M4 1h6M2 4.500h6" stroke-width="2"/><path fill="none" stroke="#000" d="M2.500 4.500h5v4h-5z"/></symbol>
    <symbol id="close" viewBox="0 0 12 10"><path stroke="#000" stroke-width="1.500" d="M2.500 1l7 8M9.500 1l-7 8"/></symbol>
    <symbol id="full" viewBox="0 0 14 14"><path fill="#fff" stroke="#183858" stroke-width="1.500" d="M3 3h8v8H3z"/><path fill="#3868b0" d="M5 5h4v3H5z"/><path fill="none" stroke="#404040" d="M.5 3V.500H3M11 .5h2.500V3M13.500 11v2.500H11M3 13.500H.5V11"/></symbol>
  </svg>

  <header class="titlebar">
    <svg class="app"><use href="#nx"/></svg>
    <h1><span class="en">NX 8.5 - </span>加工<span class="en"> - [pocketing.prt </span>（修改的）<span class="en"> ]</span></h1>
    <span class="brand">SIEMENS</span>
    <div class="winbtns">
      <button aria-label="最小化"><svg><use href="#min"/></svg></button>
      <button aria-label="还原"><svg><use href="#restore"/></svg></button>
      <button aria-label="关闭" class="gap"><svg><use href="#close"/></svg></button>
    </div>
  </header>

  <nav class="menubar">
    <i class="handle"></i>
    <svg class="app"><use href="#gen"/></svg>
    <a href="#">文件<span class="en">(<u>F</u>)</span></a>
    <a href="#">编辑<span class="en">(<u>E</u>)</span></a>
    <a href="#">视图<span class="en">(<u>V</u>)</span></a>
    <a href="#">插入<span class="en">(<u>S</u>)</span></a>
    <a href="#">格式<span class="en">(<u>R</u>)</span></a>
    <a href="#">工具<span class="en">(<u>T</u>)</span></a>
    <a href="#">装配<span class="en">(<u>A</u>)</span></a>
    <a href="#">信息<span class="en">(<u>I</u>)</span></a>
    <a href="#">分析<span class="en">(<u>L</u>)</span></a>
    <a href="#">首选项<span class="en">(<u>P</u>)</span></a>
    <a href="#">窗口<span class="en">(<u>O</u>)</span></a>
    <a href="#"><span class="en">GC </span>工具箱</a>
    <a href="#">帮助<span class="en">(<u>H</u>)</span></a>
    <div class="winbtns">
      <button aria-label="最小化"><svg><use href="#min"/></svg></button>
      <button aria-label="还原"><svg><use href="#restore"/></svg></button>
      <button aria-label="关闭"><svg><use href="#close"/></svg></button>
    </div>
  </nav>

  <div class="toolbar row1">
    <div class="group">
      <i class="handle"></i>
      <button class="start"><svg><use href="#nx"/></svg>开始<i class="arr"></i></button>
      <button aria-label="新建"><svg><use href="#new"/></svg></button>
      <button aria-label="打开"><svg><use href="#open"/></svg></button>
      <button aria-label="保存"><svg><use href="#save"/></svg></button>
      <button aria-label="打印"><svg><use href="#print"/></svg></button>
      <i class="sep"></i>
      <button aria-label="剪切"><svg><use href="#cut"/></svg></button>
      <button aria-label="复制"><svg><use href="#copy"/></svg></button>
      <button aria-label="粘贴"><svg><use href="#paste"/></svg></button>
      <button aria-label="删除"><svg><use href="#del"/></svg></button>
      <i class="sep"></i>
      <button aria-label="撤消"><svg><use href="#undo"/></svg></button>
      <button class="over" aria-label="更多"><svg><use href="#more"/></svg><i class="arr"></i></button>
    </div>
    <div class="group">
      <i class="handle"></i>
      <button aria-label="适合窗口"><svg><use href="#fit"/></svg></button>
      <button class="dd" aria-label="展开"><i class="arr"></i></button>
      <button aria-label="定向视图"><svg><use href="#laptop"/></svg></button>
      <button class="dd" aria-label="展开"><i class="arr"></i></button>
      <button aria-label="着色"><svg><use href="#bluecube"/></svg></button>
      <button class="dd" aria-label="展开"><i class="arr"></i></button>
      <button aria-label="编辑截面"><svg><use href="#secorange"/></svg></button>
      <button aria-label="剪切截面"><svg><use href="#secgreen"/></svg></button>
      <button class="dd" aria-label="展开"><i class="arr"></i></button>
      <button aria-label="背景"><svg><use href="#blank"/></svg></button>
      <button class="dd" aria-label="展开"><i class="arr"></i></button>
      <i class="sep"></i>
      <button aria-label="移入"><svg><use href="#boxin"/></svg></button>
      <button aria-label="移出"><svg><use href="#boxout"/></svg></button>
      <button class="over" aria-label="更多"><i class="arr"></i></button>
    </div>
    <div class="group">
      <i class="handle"></i>
      <button aria-label="图层"><svg><use href="#layers"/></svg></button>
      <button aria-label="坐标系"><svg><use href="#wcs"/></svg></button>
      <button class="dd" aria-label="展开"><i class="arr"></i></button>
      <i class="sep"></i>
      <button aria-label="显示和隐藏"><svg><use href="#showhide"/></svg></button>
      <button aria-label="对象显示"><svg><use href="#palette"/></svg></button>
      <i class="sep"></i>
      <button aria-label="移动对象"><svg><use href="#moveobj"/></svg></button>
      <button class="dd" aria-label="展开"><i class="arr"></i></button>
      <i class="sep"></i>
      <button aria-label="测量"><svg><use href="#measure1"/></svg></button>
      <button class="dd" aria-label="展开"><i class="arr"></i></button>
      <button aria-label="测量距离"><svg><use href="#ruler"/></svg></button>
      <button class="over" aria-label="更多"><i class="arr"></i></button>
    </div>
  </div>

  <div class="toolbar row2">
    <div class="group">
      <i class="handle"></i>
      <button aria-label="创建程序"><svg><use href="#cprog"/></svg></button>
      <button aria-label="创建刀具"><svg><use href="#ctool"/></svg></button>
      <button aria-label="创建几何体"><svg><use href="#cgeom"/></svg></button>
      <button aria-label="创建方法"><svg><use href="#cmeth"/></svg></button>
      <button aria-label="创建工序"><svg><use href="#cop"/></svg></button>
      <button class="over" aria-label="更多"><i class="arr"></i></button>
    </div>
    <div class="group">
      <i class="handle"></i>
      <button aria-label="编辑对象"><svg><use href="#oedit"/></svg></button>
      <button aria-label="剪切对象"><svg><use href="#ocut"/></svg></button>
      <button aria-label="复制对象"><svg><use href="#ocopy"/></svg></button>
      <button class="over" aria-label="更多"><svg><use href="#more"/></svg><i class="arr"></i></button>
    </div>
    <div class="group">
      <i class="handle"></i>
      <button aria-label="生成刀轨"><svg><use href="#gen"/></svg></button>
      <button aria-label="重播刀轨"><svg><use href="#replay"/></svg></button>
      <button aria-label="确认刀轨"><svg><use href="#verify"/></svg></button>
      <button aria-label="列出刀轨"><svg><use href="#listing"/></svg></button>
      <button aria-label="机床仿真"><svg><use href="#sim"/></svg></button>
      <button aria-label="同步" disabled><svg><use href="#grayops"/></svg></button>
      <i class="sep"></i>
      <button aria-label="后处理"><svg><use href="#post"/></svg></button>
      <button class="over" aria-label="更多"><svg><use href="#more"/></svg><i class="arr"></i></button>
    </div>
    <div class="group">
      <i class="handle"></i>
      <button aria-label="起点"><svg><use href="#horn1"/></svg></button>
      <button aria-label="方向"><svg><use href="#horn2"/></svg></button>
      <button class="dd" aria-label="展开"><i class="arr"></i></button>
      <button class="over" aria-label="更多"><svg><use href="#more"/></svg><i class="arr"></i></button>
    </div>
    <div class="group">
      <i class="handle"></i>
      <button class="on" aria-label="特征视图"><svg><use href="#progview"/></svg></button>
      <button aria-label="特征组"><svg><use href="#toolview"/></svg></button>
      <i class="sep"></i>
      <button aria-label="查找特征"><svg><use href="#findred"/></svg></button>
      <button aria-label="标记特征"><svg><use href="#plus"/></svg></button>
      <button class="over" aria-label="更多"><svg><use href="#more"/></svg><i class="arr"></i></button>
    </div>
    <div class="group">
      <i class="handle"></i>
      <button aria-label="验证"><svg><use href="#vcheck"/></svg></button>
      <button aria-label="卡片"><svg><use href="#vcard"/></svg></button>
      <button aria-label="列表"><svg><use href="#vtree"/></svg></button>
      <button aria-label="表格"><svg><use href="#vtable"/></svg></button>
      <i class="sep"></i>
      <button aria-label="编辑"><svg><use href="#pole"/></svg></button>
      <button class="over" aria-label="更多"><svg><use href="#more"/></svg><i class="arr"></i></button>
    </div>
  </div>

  <div class="selbar">
    <label class="combo filter"><select aria-label="过滤器"><option>没有选择过滤器</option></select><i class="arr"></i></label>
    <label class="combo scope"><select aria-label="范围"><option>整个装配</option></select><i class="arr"></i></label>
    <button aria-label="仅本部件"><svg><use href="#s1"/></svg></button>
    <i class="sep"></i>
    <button aria-label="重置过滤器"><svg><use href="#s2"/></svg></button>
    <button aria-label="点捕捉"><svg><use href="#s3"/></svg></button>
    <button class="dd" aria-label="展开"><i class="arr"></i></button>
    <button aria-label="旋转点"><svg><use href="#s4"/></svg></button>
    <button aria-label="查找"><svg><use href="#s5"/></svg></button>
    <i class="sep"></i>
    <button aria-label="矩形选择"><svg><use href="#s6"/></svg></button>
    <button class="dd" aria-label="展开"><i class="arr"></i></button>
    <i class="sep"></i>
    <button aria-label="隐藏边"><svg><use href="#s7"/></svg></button>
    <button aria-label="着色体"><svg><use href="#s8"/></svg></button>
    <button class="over" aria-label="更多"><i class="arr"></i></button>
  </div>

  <div class="cueline">
    <div class="pane"></div>
    <div class="pane"></div>
    <div class="pane"></div>
    <div class="pane"></div>
    <button aria-label="全屏"><svg><use href="#full"/></svg></button>
  </div>

  <main>
    <aside class="resbar">
      <button aria-label="装配导航器"><svg><use href="#r1"/></svg></button>
      <button aria-label="约束导航器"><svg><use href="#mirror"/></svg></button>
      <button aria-label="部件导航器"><svg><use href="#r3"/></svg></button>
      <button class="active" aria-label="工序导航器"><svg><use href="#r4"/></svg></button>
      <button aria-label="加工特征导航器"><svg><use href="#r5"/></svg></button>
      <button aria-label="机床导航器"><svg><use href="#r6"/></svg></button>
      <button aria-label="重用库"><svg><use href="#r7"/></svg></button>
      <button class="apart" aria-label="HD3D 工具"><svg><use href="#r8"/></svg></button>
      <button class="apart" aria-label="浏览器"><svg><use href="#r9"/></svg></button>
      <button class="apart last" aria-label="历史记录"><svg><use href="#r10"/></svg></button>
      <div class="scroller">
        <button class="off" aria-label="最前" disabled><i class="top"></i><i class="arr up"></i></button>
        <button class="off" aria-label="向上" disabled><i class="arr up"></i></button>
        <button aria-label="向下"><i class="arr"></i></button>
        <button aria-label="最后"><i class="arr"></i><i class="top"></i></button>
      </div>
    </aside>

    <section class="navigator">
      <h2><svg><use href="#pin"/></svg>工序导航器<span class="en"> - </span>加工方法</h2>
      <div class="list">
        <table>
          <thead>
            <tr><th>名称</th><th>刀轨</th></tr>
          </thead>
          <tbody>
            <tr><td><div class="node"><span class="en">METHOD</span></div></td><td></td></tr>
            <tr><td><div class="node"><svg class="g"><use href="#g-first"/></svg><svg><use href="#t-folder"/></svg><span>未用项</span></div></td><td></td></tr>
            <tr><td><div class="node"><svg class="g"><use href="#g-tee"/></svg><svg><use href="#t-mill"/></svg><span class="en">MILL_ROUGH</span></div></td><td></td></tr>
            <tr><td><div class="node"><svg class="g"><use href="#g-box"/></svg><svg><use href="#t-mill"/></svg><span class="en">MILL_SEMI_FINISH</span></div></td><td></td></tr>
            <tr><td><div class="node"><svg class="g"><use href="#g-line"/></svg><svg class="g"><use href="#g-boxend"/></svg><svg><use href="#t-mill"/></svg><span class="en">FINISH</span></div></td><td></td></tr>
            <tr class="selected"><td><div class="node"><svg class="g"><use href="#g-line"/></svg><svg class="g"></svg><svg class="g"><use href="#g-end"/></svg><svg class="warn"><use href="#t-warn"/></svg><svg><use href="#t-cavity"/></svg><span class="en">CAVITY_MILL</span></div></td><td><svg><use href="#t-ok"/></svg></td></tr>
            <tr><td><div class="node"><svg class="g"><use href="#g-tee"/></svg><svg><use href="#t-mill"/></svg><span class="en">MILL_FINISH</span></div></td><td></td></tr>
            <tr><td><div class="node"><svg class="g"><use href="#g-end"/></svg><svg><use href="#t-drill"/></svg><span class="en">DRILL_METHOD</span></div></td><td></td></tr>
          </tbody>
        </table>
        <div class="hscroll">
          <button aria-label="向左"><i class="arr left"></i></button>
          <div class="thumb"></div>
          <button aria-label="向右"><i class="arr right"></i></button>
        </div>
      </div>
      <div class="splitter"><i></i></div>
      <button class="fold">相依性</button>
      <button class="fold">细节</button>
    </section>

    <section class="viewport">
      <svg class="scene" viewBox="285 161 739 539">
        <defs>
          <linearGradient id="wall" x1="576" x2="740" gradientUnits="userSpaceOnUse" y1="0" y2="0">
            <stop offset="0" stop-color="#8a9292"/><stop offset=".05" stop-color="#4c5250"/><stop offset=".12" stop-color="#5e6664"/>
            <stop offset=".42" stop-color="#58605e"/><stop offset=".5" stop-color="#343a38"/><stop offset=".6" stop-color="#424a48"/>
            <stop offset=".9" stop-color="#4e5856"/><stop offset="1" stop-color="#788484"/>
          </linearGradient>
          <linearGradient id="side" x1="0" x2="0" y1="0" y2="1"><stop offset="0" stop-color="#667680"/><stop offset="1" stop-color="#60707a"/></linearGradient>
          <path id="up" d="M600 384l57-28 60 23"/>
          <path id="dn" d="M602 441l60 33 56-28"/>
          <path id="dn2" d="M625 430l35 20 33-17"/>
          <path id="up2" d="M625 394l33-16 35 14"/>
        </defs>
        <path fill="#c8e0e6" d="M523 207l419 169-147 222-419-167z"/>
        <path fill="#4a5250" d="M376 431l419 167 1 48-418-168z"/>
        <path fill="url(#side)" d="M942 376l1 46-147 224-1-48z"/>
        <path fill="url(#wall)" d="M576 400v-24q1-8 10-13l58-29q12-6 24-2l60 24q11 5 12 18v21q-3-11-14-16l-58-22q-12-5-24 1l-52 25q-12 6-16 17z"/>
        <path stroke="#b0c8d0" d="M740 395v26"/>

        <!-- tool path -->
        <g fill="none" stroke="#10ecf4" stroke-width="1.300">
          <use href="#up"/><use href="#up" y="4"/><use href="#up" y="8"/><use href="#up" y="12"/><use href="#up" y="16"/><use href="#up" y="20"/>
          <use href="#dn"/><use href="#dn" y="-4"/><use href="#dn" y="-8"/><use href="#dn" y="-12"/><use href="#dn" y="-16"/><use href="#dn" y="-20"/>
          <use href="#up2"/><use href="#up2" y="5"/>
          <use href="#dn2"/><use href="#dn2" y="-4"/><use href="#dn2" y="-8"/><use href="#dn2" y="-12"/>
          <path d="M600 384l2 57M717 379l1 67M625 390v46M693 389v46M649 408l10-5 15 6v14l-13 8-12-7zM653 411l7-4 10 4v9l-9 6-8-5z"/>
        </g>
        <g fill="none" stroke="#f0f8fa" stroke-width="1.500"><path d="M603 419h26M694 425l26-3"/><path stroke-width="3" d="M675 415l11 28M678 424l8 20"/></g>
        <g fill="none" stroke="#f4f040" stroke-width="2.500">
          <path d="M637 427c-14-17-5-53 20-56 14-1 17 12 15 25M634 413c4-20 32-22 44-15 16 9 13 22-4 25-16 4-38-2-40-10"/>
          <path d="M629 407c-4 14 0 24 10 26l20 5c8 1 12-2 16-8l-2-10c-10-7-28-6-44-13M640 376c-12 12-4 26-2 34 4 8 14 10 24 8"/>
        </g>
        <path stroke="#68e020" stroke-width="4" d="M665 416l10 11"/><path stroke="#30c030" d="M625 419.500h20M675 425.500h20M668 412l6-12"/>
        <g stroke="#e81818" stroke-width="2"><path d="M624 390l8-4M639 382l7-2M661 376l6-6M673 384l1 7M674 403l1 14"/></g>
        <g stroke="#1828d0" stroke-width="2"><path d="M624 390v8M647 386v8M662 388v8M673 364v8M692 386v12M655 401v9M676 406v10"/></g>

        <path stroke="#1c3cb8" stroke-width="2" d="M658 403l-1-42"/><path fill="#1840c0" d="M657 353l-4 11h8z"/>
        <path stroke="#308838" stroke-width="1.500" d="M658 403l33-52"/><path fill="#389040" d="M696 345l-8 7 5 4z"/>
        <path stroke="#c03030" stroke-width="1.500" d="M656 401l64 26"/><path fill="#c83030" d="M732 432l-14-8-1 6z"/>
        <text class="axis" x="658" y="352" fill="#2840e0">ZM</text>
        <text class="axis" x="682" y="341" fill="#3a6840">YM</text>
        <text class="axis" x="718" y="443" fill="#d03838">XM</text>

        <!-- cursor -->
        <g fill="none" stroke="#000"><circle cx="373.500" cy="529.500" r="12.500" stroke-dasharray="12 7.600" stroke-dashoffset="-3.500"/><path fill="#fff" d="M372.500 514.500h2v14h14v2h-14v14h-2v-14h-14v-2h14z"/></g>

        <!-- view triad -->
        <g stroke="#b0b8b0" fill="#d8dcd8"><path d="M330 650l5-18 8-6 11 7-3 18-9 5z"/><path fill="none" d="M335 632l11 5 8-4M346 637l-4 19M332 644l13 4 8-6M343 626l-4 18-9 6M339 644l12 5"/></g>
        <path stroke="#2038b8" stroke-width="2" d="M328 653v-15"/><path fill="#2038b8" d="M328 633l-4 7h8z"/>
        <path stroke="#c82828" stroke-width="2.500" d="M330 654l18 7"/><path fill="#c82828" d="M354 664l-8-6-1 5z"/>
        <circle cx="328" cy="654" r="3" fill="#b0bcc8"/>
        <text class="axis" x="341" y="632" fill="#507050">Y</text>
        <text class="axis" x="356" y="669" fill="#d03838">X</text>
        <text class="axis" x="325" y="634" fill="#5068e0">Z</text>
      </svg>
      <p class="watermark"><span>兆迪科技</span><span>培训咨询电话:</span><span>010-82176248</span></p>
    </section>
  </main>

  <div class="toolbar row3">
    <div class="group">
      <i class="handle"></i>
      <button aria-label="程序顺序视图"><svg><use href="#nprog"/></svg></button>
      <button aria-label="机床视图"><svg><use href="#ntool"/></svg></button>
      <button aria-label="几何视图"><svg><use href="#ngeom"/></svg></button>
      <button class="on" aria-label="加工方法视图"><svg><use href="#nmeth"/></svg></button>
      <button class="over" aria-label="更多"><i class="arr"></i></button>
    </div>
    <div class="group">
      <i class="handle"></i>
      <button aria-label="分析"><svg><use href="#fringe"/></svg></button>
      <button class="dd" aria-label="展开"><i class="arr"></i></button>
      <button aria-label="链接"><svg><use href="#chain"/></svg></button>
      <button aria-label="点"><svg><use href="#cross"/></svg></button>
      <button class="dd" aria-label="展开"><i class="arr"></i></button>
      <button aria-label="基准"><svg><use href="#spot"/></svg></button>
      <button class="dd" aria-label="展开"><i class="arr"></i></button>
      <button aria-label="拉伸"><svg><use href="#cyl"/></svg></button>
      <button aria-label="块"><svg><use href="#block"/></svg></button>
      <button aria-label="面"><svg><use href="#wire"/></svg></button>
      <button class="dd" aria-label="展开"><i class="arr"></i></button>
      <button class="over" aria-label="更多"><i class="arr"></i></button>
    </div>
  </div>

  <div class="toolbar row4">
    <div class="group">
      <i class="handle"></i>
      <button aria-label="查找组件"><svg><use href="#findcube"/></svg></button>
      <button class="dd" aria-label="展开"><i class="arr"></i></button>
      <button aria-label="产品轮廓"><svg><use href="#cubes3"/></svg></button>
      <button aria-label="小平面" disabled><svg><use href="#graycube"/></svg></button>
      <button aria-label="添加组件"><svg><use href="#addcube"/></svg></button>
      <button class="dd" aria-label="展开"><i class="arr"></i></button>
      <button aria-label="移动组件"><svg><use href="#movecube"/></svg></button>
      <button aria-label="镜像装配"><svg><use href="#mirror"/></svg></button>
      <button aria-label="装配约束"><svg><use href="#constr"/></svg></button>
      <i class="sep"></i>
      <button aria-label="编辑布置"><svg><use href="#wrcube"/></svg></button>
      <button aria-label="阵列"><svg><use href="#threecube"/></svg></button>
      <button aria-label="序列"><svg><use href="#steps"/></svg></button>
      <i class="sep"></i>
      <button aria-label="显示"><svg><use href="#hexa"/></svg></button>
      <i class="sep"></i>
      <button aria-label="WAVE"><svg><use href="#chain"/></svg></button>
      <button aria-label="部件间链接"><svg><use href="#chain2"/></svg></button>
      <button aria-label="关系浏览器"><svg><use href="#infotree"/></svg></button>
      <i class="sep"></i>
      <button aria-label="替换"><svg><use href="#cubeup"/></svg></button>
      <button class="dd" aria-label="展开"><i class="arr"></i></button>
      <button class="over" aria-label="更多"><i class="arr"></i></button>
    </div>
  </div>

</body>
</html>
```

FILE: styles.css
```css
* {
  box-sizing: border-box;
}

body {
  margin: 0;
  height: 100vh;
  display: flex;
  flex-direction: column;
  background: #c0c0c0;
  color: #000;
  font-family: "Noto Sans CJK SC", "Noto Sans", sans-serif;
  font-size: 12px;
  line-height: 18px;
  overflow: hidden;
}

button {
  margin: 0;
  padding: 0;
  border: 0;
  background: none;
  color: inherit;
  font: inherit;
}

.sprite {
  position: absolute;
  width: 0;
  height: 0;
}

/* latin text is half the width of a chinese character */
.en {
  font-family: "DejaVu Sans Mono", monospace;
  font-size: 10px;
  white-space: pre;
}

/* title bar */
.titlebar {
  display: flex;
  align-items: center;
  height: 18px;
  padding: 0 3px 0 2px;
  background: #000a78;
  color: #fff;
}

.titlebar h1 {
  margin: 0;
  flex: 1;
  font-size: 12px;
  font-weight: normal;
  line-height: 18px;
}

.app {
  width: 16px;
  height: 16px;
  margin-right: 2px;
}

.brand {
  margin-right: 10px;
  color: #08a0a8;
  font-family: "Liberation Sans", Arial, sans-serif;
  font-size: 14px;
  font-weight: bold;
  line-height: 16px;
}

.winbtns {
  display: flex;
}

.winbtns button {
  display: flex;
  align-items: center;
  justify-content: center;
  width: 16px;
  height: 14px;
  background: #c8c8c8;
  border: 1px solid;
  border-color: #fff #404040 #404040 #fff;
}

.winbtns .gap {
  margin-left: 2px;
}

.winbtns svg {
  width: 12px;
  height: 10px;
}

/* menu bar */
.menubar {
  display: flex;
  align-items: center;
  height: 25px;
  padding-right: 4px;
  border-top: 1px solid #e8e8e8;
  border-bottom: 1px solid #808080;
}

.menubar .app {
  margin: 0 6px 0 0;
}

.menubar a {
  margin-right: 13px;
  color: #000;
  line-height: 22px;
  text-decoration: none;
  white-space: nowrap;
}

.menubar .winbtns {
  margin-left: auto;
}

/* toolbars */
.toolbar {
  display: grid;
  height: 34px;
  flex: none;
}

.row1 {
  grid-template-columns: 394px 336px 1fr;
}

.row2 {
  grid-template-columns: 177px 123px 249px 131px 152px 1fr;
}

.row3 {
  grid-template-columns: 145px 287px;
}

.row4 {
  grid-template-columns: 542px;
}

.group {
  display: flex;
  align-items: center;
  border: 1px solid;
  border-color: #e8e8e8 #707070 #707070 #d8d8d8;
}

.handle {
  flex: none;
  width: 3px;
  height: 28px;
  margin: 0 1px 0 3px;
  border: 1px solid;
  border-color: #fff #808080 #808080 #fff;
}

.menubar .handle {
  height: 18px;
}

.group button {
  display: flex;
  align-items: center;
  justify-content: center;
  flex: none;
  width: 31px;
  height: 30px;
  padding-right: 1px;
}

.group button svg {
  width: 24px;
  height: 24px;
}

.group .start {
  width: 67px;
  gap: 4px;
}

.group .on {
  background: #d8d8d8;
  border: 1px solid;
  border-color: #808080 #fff #fff #808080;
}

.group .dd {
  width: 12px;
  padding: 0;
}

.group .over {
  flex-direction: column;
  justify-content: space-between;
  width: 12px;
  margin: 0 1px 0 auto;
  padding: 4px 0 5px;
}

.group .over .arr {
  margin-top: auto;
}

.group .over svg {
  width: 8px;
  height: 6px;
}

.sep {
  flex: none;
  width: 2px;
  height: 29px;
  margin: 0 1px 0 2px;
  border-left: 1px solid #808080;
  border-right: 1px solid #e0e0e0;
}

.arr {
  width: 0;
  height: 0;
  border: 3px solid transparent;
  border-top-color: #000;
  border-bottom: 0;
}

.arr.up {
  border-top: 0;
  border-bottom: 3px solid #000;
}

.arr.left {
  border: 4px solid transparent;
  border-right-color: #000;
  border-left: 0;
}

.arr.right {
  border: 4px solid transparent;
  border-left-color: #000;
  border-right: 0;
}

/* selection bar */
.selbar {
  display: flex;
  align-items: center;
  height: 29px;
  flex: none;
  padding: 0 3px 2px 5px;
  background: linear-gradient(#e0e0e0, #c0c0c0);
}

.combo {
  display: flex;
  align-items: center;
  height: 18px;
  margin-right: 9px;
  padding-right: 5px;
  background: #dcdcdc;
  border: 1px solid #d0d0d0;
}

.filter {
  width: 108px;
}

.scope {
  width: 115px;
  margin-right: 3px;
}

.combo select {
  flex: 1;
  min-width: 0;
  height: 14px;
  margin-right: 5px;
  padding: 0;
  appearance: none;
  border: 0;
  background: #f8f8f8;
  color: #000;
  font: inherit;
  line-height: 14px;
}

.filter select {
  background: linear-gradient(90deg, #e8e8e8, #f8f8f8);
}

.selbar button {
  display: flex;
  align-items: center;
  justify-content: center;
  width: 24px;
  height: 24px;
}

.selbar button svg {
  width: 18px;
  height: 18px;
}

.selbar .sep {
  height: 24px;
}

.selbar .dd {
  width: 9px;
}

.selbar .over {
  align-items: flex-end;
  width: 12px;
  padding-bottom: 4px;
  margin-left: auto;
}

/* cue line */
.cueline {
  display: grid;
  grid-template-columns: 474fr 473fr 20px 34px 22px;
  height: 21px;
  flex: none;
  border-bottom: 1px solid #a0a0a0;
}

.pane {
  border: 1px solid;
  border-color: #808080 #f0f0f0 #f0f0f0 #808080;
}

.cueline svg {
  display: block;
  width: 14px;
  height: 14px;
  margin: auto;
}

main {
  display: flex;
  flex: 1;
  min-height: 0;
}

/* resource bar */
.resbar {
  display: flex;
  flex-direction: column;
  align-items: flex-end;
  width: 33px;
  padding-top: 16px;
  background: #787878;
}

.resbar > button {
  flex: none;
  width: 27px;
  height: 42px;
  background: #c0c0c0;
  border: 1px solid;
  border-color: #e8e8e8 #c0c0c0 #404040 #e8e8e8;
  border-radius: 4px 0 0 4px;
}

.resbar > button.active {
  width: 29px;
  height: 44px;
}

.resbar > .apart {
  margin-top: 12px;
}

.resbar > .last {
  height: 37px;
  border-bottom-left-radius: 12px;
}

.resbar svg {
  display: block;
  width: 24px;
  height: 24px;
}

.scroller {
  display: grid;
  gap: 1px;
  margin: 3px 8px 0 0;
}

.scroller button {
  display: flex;
  flex-direction: column;
  align-items: center;
  justify-content: center;
  gap: 1px;
  width: 15px;
  height: 15px;
  background: #c0c0c0;
  border: 1px solid;
  border-color: #fff #404040 #404040 #fff;
}

.scroller .top {
  width: 7px;
  height: 1px;
  background: #000;
}

.scroller .off i {
  opacity: 0.5;
}

/* operation navigator */
.navigator {
  display: flex;
  flex-direction: column;
  width: 252px;
  padding: 8px 11px 12px 10px;
  border-top: 2px solid #888;
  border-right: 3px ridge #a0a0a0;
  border-bottom: 1px solid #707070;
}

.navigator h2 {
  display: flex;
  align-items: center;
  height: 19px;
  margin: 0 0 3px;
  font-size: 12px;
  font-weight: normal;
}

.navigator h2 svg {
  width: 12px;
  height: 12px;
  margin-right: 7px;
}

.list {
  display: flex;
  flex-direction: column;
  flex: 1;
  border: 1px solid;
  border-color: #404040 #f0f0f0 #f0f0f0 #404040;
  background: linear-gradient(#000, #000) 199px 0 / 1px 100% no-repeat #f8f8f8;
}

table {
  width: 100%;
  table-layout: fixed;
  border-collapse: separate;
  border-spacing: 0;
}

th {
  height: 16px;
  padding: 0 0 0 6px;
  background: #c0c0c0;
  border-right: 1px solid #404040;
  border-bottom: 1px solid #404040;
  font-weight: normal;
  line-height: 15px;
  text-align: left;
}

th:first-child {
  width: 200px;
}

th:last-child {
  padding-left: 2px;
  border-right: 0;
  white-space: nowrap;
}

td {
  height: 18px;
  padding: 0;
}

td:first-child {
  border-right: 1px solid #000;
}

.node {
  display: flex;
  align-items: center;
  height: 18px;
}

.node svg {
  flex: none;
  width: 16px;
  height: 16px;
}

.node .g {
  width: 19px;
  height: 18px;
}

.node .warn {
  width: 8px;
  margin-right: 6px;
  margin-left: 2px;
}

.node span {
  flex: 1;
  height: 18px;
  padding-left: 2px;
}

.selected .node span,
.selected td:last-child {
  background: #001c64;
  color: #fff;
}

.selected td:last-child svg {
  display: block;
  width: 14px;
  height: 14px;
  margin-left: 5px;
}

.hscroll {
  display: flex;
  height: 17px;
  margin-top: auto;
  background: #e0e0e0;
}

.hscroll button,
.thumb {
  display: flex;
  align-items: center;
  justify-content: center;
  width: 16px;
  background: #c0c0c0;
  border: 1px solid;
  border-color: #f0f0f0 #404040 #404040 #f0f0f0;
}

.hscroll .thumb {
  width: 74px;
  margin-right: auto;
}

.splitter {
  display: flex;
  justify-content: center;
  margin: 3px 0 5px;
  height: 6px;
  background: linear-gradient(#808080, #808080) 0 1px / 100% 1px no-repeat, linear-gradient(#808080, #808080) 0 4px / 100% 1px no-repeat;
}

.splitter i {
  width: 60px;
  background: #f8f8f8;
  border: 1px solid #808080;
}

.fold {
  height: 16px;
  margin: 0 3px 7px;
  padding-left: 8px;
  border: 1px solid #808080;
  border-radius: 6px;
  line-height: 14px;
  text-align: left;
}

.fold:last-child {
  margin-bottom: 0;
}

/* graphics window */
.viewport {
  position: relative;
  flex: 1;
  min-width: 0;
  background: #f8f8f8;
}

.scene {
  display: block;
  width: 100%;
  height: 100%;
}

.axis {
  font-family: "Liberation Sans", Arial, sans-serif;
  font-size: 10px;
}

.watermark {
  position: absolute;
  left: 18px;
  top: 280px;
  display: flex;
  margin: 0;
  height: 27px;
  padding-right: 6px;
  background: rgba(255, 255, 255, 0.4);
  line-height: 27px;
  white-space: nowrap;
}

.watermark span {
  margin-right: 12px;
  background: linear-gradient(#b04890 30%, #4858a8 80%);
  background-clip: text;
  color: transparent;
  font-family: "Liberation Serif", "Noto Sans CJK SC", serif;
  font-size: 21px;
  font-style: italic;
  font-weight: 500;
}

.watermark span:last-child {
  margin-right: 0;
  font-size: 22px;
  font-weight: bold;
}
```
